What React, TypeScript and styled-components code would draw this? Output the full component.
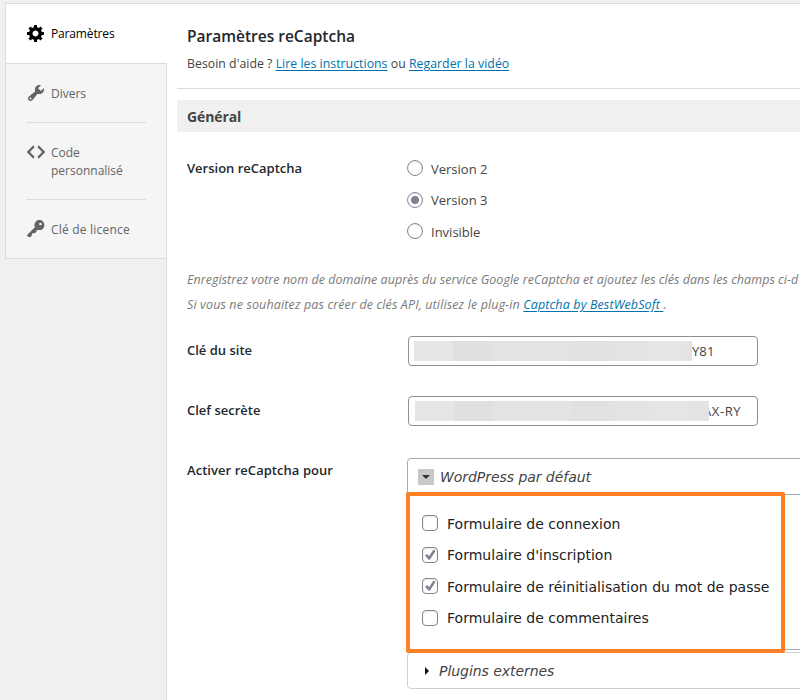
import React from 'react';
import styled, { createGlobalStyle } from 'styled-components';

const GlobalStyle = createGlobalStyle`
  *, *::before, *::after { box-sizing: border-box; }
  html, body { margin: 0; overflow: hidden; background: #f0f0f0; }
  body { font-family: "Open Sans", "Noto Sans", sans-serif; font-size: 13px; color: #444; }
`;

const Page = styled.div`
  width: 800px;
  height: 700px;
  overflow: hidden;
  padding: 3px 0 0 5px;
  background: #f0f0f0;
`;

const Shell = styled.div`
  display: flex;
  width: 795px;
  height: 697px;
  border-top: 1px solid #dcdcdc;
`;

const Sidebar = styled.nav`
  flex: none;
  width: 162px;
  height: 255px;
  border-left: 1px solid #dcdcdc;
  border-bottom: 1px solid #dcdcdc;
  background: #f5f5f5;
`;

const Tab = styled.div<{ $active?: boolean; $height: number }>`
  position: relative;
  z-index: ${p => (p.$active ? 1 : 0)};
  height: ${p => p.$height}px;
  padding: 0 21px 0 20px;
  background: ${p => (p.$active ? '#fff' : 'transparent')};
  border-bottom: ${p => (p.$active ? '1px solid #dcdcdc' : 'none')};
  color: ${p => (p.$active ? '#000' : '#646464')};
`;

const TabBody = styled.div<{ $line?: boolean; $lift?: number }>`
  display: flex;
  align-items: flex-start;
  height: 100%;
  padding-top: 20px;
  border-bottom: ${p => (p.$line ? '1px solid #dcdcdc' : 'none')};

  svg {
    flex: none;
    width: 20px;
    height: 20px;
    margin: ${p => -(p.$lift ?? 0)}px 5px 0 0;
    fill: currentColor;
  }
`;

const TabLabel = styled.span<{ $track?: number }>`
  font-size: 12px;
  line-height: 18px;
  padding-top: 1px;
  letter-spacing: ${p => p.$track ?? 0}px;
`;

const Content = styled.main`
  flex: 1;
  min-width: 0;
  height: 696px;
  padding-left: 10px;
  background: #fff;
  border-left: 1px solid #dcdcdc;
  margin-left: -1px;
`;

const Intro = styled.header`
  height: 85px;
  padding: 20px 0 0 10px;
  border-bottom: 1px solid #dcdcdc;
`;

const Title = styled.h1`
  margin: 0;
  font-size: 15.5px;
  font-weight: 600;
  line-height: 24px;
  color: #23282d;
`;

const Help = styled.p`
  margin: 7px 0 0;
  font-size: 12.3px;
  line-height: 18px;
  letter-spacing: 0.025px;
  white-space: nowrap;
`;

const Link = styled.a`
  color: #0073aa;
  text-decoration: underline;
  text-underline-offset: 2px;
`;

const Section = styled.h2`
  height: 32px;
  margin: 11px 0 0;
  padding-left: 10px;
  background: #f0f0f0;
  color: #444;
  font-size: 14px;
  font-weight: 700;
  line-height: 33px;
  letter-spacing: -0.1px;
`;

const Row = styled.div<{ $height: number }>`
  display: flex;
  height: ${p => p.$height}px;
  padding-left: 10px;
`;

const RowLabel = styled.div<{ $track?: number; $top?: number }>`
  flex: none;
  width: 220px;
  padding-top: ${p => p.$top ?? 4}px;
  font-size: 13px;
  font-weight: 600;
  line-height: 20px;
  letter-spacing: ${p => p.$track ?? 0}px;
  color: #23282d;
`;

const Choices = styled.div`
  display: flex;
  flex-direction: column;
  padding-top: 28px;
  gap: 15.5px;
`;

const Choice = styled.label<{ $textTop: number }>`
  display: flex;
  align-items: flex-start;
  height: 16px;
  gap: 8px;
  line-height: 16px;

  span { padding-top: ${p => p.$textTop}px; }
`;

const Radio = styled.i<{ $on?: boolean }>`
  width: 16px;
  height: 16px;
  border: 1px solid #82878c;
  border-radius: 50%;
  background: ${p => (p.$on ? 'radial-gradient(circle, #7f8494 0 3.7px, transparent 4.4px)' : '#fff')};
  box-shadow: inset 0 1px 2px rgba(0, 0, 0, 0.1);
`;

const Note = styled.div`
  height: 82px;
  padding: 13px 0 0 10px;
  font-size: 12.5px;
  font-style: italic;
  line-height: 25px;
  white-space: nowrap;
  color: #7a7a7a;
`;

const NoteLine = styled.div<{ $track: number }>`
  overflow: hidden;
  letter-spacing: ${p => p.$track}px;
`;

const Field = styled.div`
  display: flex;
  align-items: center;
  width: 350px;
  height: 30px;
  margin-left: 1px;
  padding-left: 5px;
  border: 1px solid #8c8f94;
  border-radius: 4px;
  background: #fff;
`;

const Redacted = styled.span<{ $width: number; $shift: number }>`
  flex: none;
  z-index: 1;
  width: ${p => p.$width}px;
  height: 20px;
  margin-left: ${p => p.$shift}px;
  background: linear-gradient(90deg, #e4e5e7 0 39px, #e0e0e0 39px 78px, #e3e3e5 78px 156px, #e1e1e1 156px 195px, #e3e3e5 195px 234px, #e4e5e7 234px 273px, #e3e3e4 273px);
`;

const Tail = styled.span<{ $tuck?: boolean }>`
  line-height: 20px;
  letter-spacing: ${p => (p.$tuck ? 0.6 : 0.1)}px;
  margin-left: ${p => (p.$tuck ? -6 : 0)}px;
`;

const Groups = styled.div`
  position: relative;
  flex: none;
  width: 430px;
  margin-top: 2px;
  font-family: "DejaVu Sans", sans-serif;
  font-size: 14px;
`;

const Group = styled.section`
  height: 192px;
  border: 1px solid #a7aaad;
  border-radius: 4px;
`;

const GroupHead = styled.div<{ $line?: boolean }>`
  display: flex;
  align-items: center;
  height: 36px;
  padding-left: 10px;
  gap: ${p => (p.$line ? 6 : 5)}px;
  border-bottom: ${p => (p.$line ? '1px solid #a7aaad' : 'none')};
  font-style: italic;
  letter-spacing: -0.05px;
`;

const Toggle = styled.span<{ $open?: boolean }>`
  display: flex;
  width: 16px;
  height: 16px;
  background: ${p => (p.$open ? '#c8c8c8' : 'transparent')};

  svg { width: 16px; height: 16px; fill: ${p => (p.$open ? '#333' : '#111')}; }
`;

const CheckList = styled.div`
  display: flex;
  flex-direction: column;
  gap: 15.5px;
  padding: 20px 0 0 14px;
`;

const CheckRow = styled.label`
  display: flex;
  align-items: center;
  height: 16px;
  gap: 9px;
  line-height: 16px;
  letter-spacing: 0.02px;
  color: #222;
  white-space: nowrap;

  span { padding-top: 1px; }
`;

const Box = styled.i`
  display: flex;
  width: 16px;
  height: 16px;
  border: 1px solid #82878c;
  border-radius: 4px;
  background: #fff;
  box-shadow: inset 0 1px 2px rgba(0, 0, 0, 0.1);

  svg { width: 14px; height: 14px; fill: #7f8494; }
`;

const Highlight = styled.div`
  position: absolute;
  left: -1px;
  top: 34px;
  width: 379px;
  height: 161px;
  border: 4px solid #ff7f27;
  border-radius: 2px;
  pointer-events: none;
`;

const NextGroup = styled.section`
  height: 37px;
  margin-top: 2px;
  border: 1px solid #ccd0d4;
  border-radius: 4px;
`;

const icons = {
  gear: 'M18 12h-2.18c-.17.7-.44 1.35-.81 1.93l1.54 1.54-2.1 2.1-1.54-1.54c-.58.36-1.23.63-1.91.79V19H8v-2.18c-.68-.16-1.33-.43-1.91-.79l-1.54 1.54-2.12-2.12 1.54-1.54c-.36-.58-.63-1.23-.79-1.91H1V9.03h2.17c.16-.7.44-1.35.8-1.94L2.43 5.55l2.1-2.1 1.54 1.54c.58-.37 1.24-.64 1.93-.81V2h3v2.18c.68.16 1.33.43 1.91.79l1.54-1.54 2.12 2.12-1.54 1.54c.36.59.64 1.24.8 1.94H18V12zm-8.5 1.5c1.66 0 3-1.34 3-3s-1.34-3-3-3-3 1.34-3 3 1.34 3 3 3z',
  wrench: 'M16.68 9.77c-1.34 1.34-3.3 1.67-4.95.99l-5.41 6.52c-.99.99-2.59.99-3.58 0s-.99-2.59 0-3.57l6.52-5.42c-.68-1.65-.35-3.61.99-4.95 1.28-1.28 3.12-1.62 4.72-1.06l-2.89 2.89 2.82 2.82 2.86-2.87c.53 1.58.18 3.39-1.08 4.65zM3.81 16.21c.4.39 1.04.39 1.43 0 .4-.4.4-1.04 0-1.43-.39-.4-1.03-.4-1.43 0-.39.39-.39 1.03 0 1.43z',
  code: 'M8.6 5.2L3.9 10l4.7 4.8-1.3 1.9L.8 10l6.5-6.7zm2.8 9.6l4.7-4.8-4.7-4.8 1.3-1.9 6.5 6.7-6.5 6.7z',
  key: 'M16.95 2.58c1.96 1.95 1.96 5.12 0 7.07-1.51 1.51-3.75 1.84-5.59 1.01l-1.87 3.31-2.99.31L5 18H2l-1-2 7.95-7.69c-.92-1.87-.62-4.18.93-5.73 1.95-1.96 5.12-1.96 7.07 0zm-2.51 3.79c.74 0 1.33-.6 1.33-1.34 0-.73-.59-1.33-1.33-1.33-.73 0-1.33.6-1.33 1.33 0 .74.6 1.34 1.33 1.34z',
};

const Icon = ({ name }: { name: keyof typeof icons }) => (
  <svg viewBox="0 0 20 20"><path d={icons[name]} /></svg>
);

const versions = [
  { label: 'Version 2', top: 1 },
  { label: 'Version 3', top: 0 },
  { label: 'Invisible', top: 1 },
];

const forms = [
  { label: 'Formulaire de connexion', on: false },
  { label: "Formulaire d'inscription", on: true },
  { label: 'Formulaire de réinitialisation du mot de passe', on: true },
  { label: 'Formulaire de commentaires', on: false },
];

export default function App() {
  return (
    <>
      <GlobalStyle />
      <Page>
        <Shell>
          <Sidebar>
            <Tab $active $height={60}>
              <TabBody $lift={1}><Icon name="gear" /><TabLabel $track={-0.15}>Paramètres</TabLabel></TabBody>
            </Tab>
            <Tab $height={59}>
              <TabBody $line $lift={1}><Icon name="wrench" /><TabLabel>Divers</TabLabel></TabBody>
            </Tab>
            <Tab $height={77}>
              <TabBody $line $lift={1}><Icon name="code" /><TabLabel>Code<br />personnalisé</TabLabel></TabBody>
            </Tab>
            <Tab $height={58}>
              <TabBody $lift={1}><Icon name="key" /><TabLabel $track={0.2}>Clé de licence</TabLabel></TabBody>
            </Tab>
          </Sidebar>
          <Content>
            <Intro>
              <Title>Paramètres reCaptcha</Title>
              <Help>
                Besoin d'aide ? <Link>Lire les instructions</Link> ou <Link>Regarder la vidéo</Link>
              </Help>
            </Intro>
            <Section>Général</Section>
            <Row $height={122}>
              <RowLabel $top={26}>Version reCaptcha</RowLabel>
              <Choices>
                {versions.map(v => (
                  <Choice key={v.label} $textTop={v.top}>
                    <Radio $on={v.label === 'Version 3'} /><span>{v.label}</span>
                  </Choice>
                ))}
              </Choices>
            </Row>
            <Note>
              <NoteLine $track={0.035}>Enregistrez votre nom de domaine auprès du service Google reCaptcha et ajoutez les clés dans les champs ci-d</NoteLine>
              <NoteLine $track={0.13}>Si vous ne souhaitez pas créer de clés API, utilisez le plug-in <Link>Captcha by BestWebSoft </Link>.</NoteLine>
            </Note>
            <Row $height={60}>
              <RowLabel>Clé du site</RowLabel>
              <Field><Redacted $width={278} $shift={0} /><Tail>Y81</Tail></Field>
            </Row>
            <Row $height={60}>
              <RowLabel>Clef secrète</RowLabel>
              <Field><Redacted $width={294} $shift={1} /><Tail $tuck>AX-RY</Tail></Field>
            </Row>
            <Row $height={240}>
              <RowLabel $track={0.05}>Activer reCaptcha pour</RowLabel>
              <Groups>
                <Group>
                  <GroupHead $line>
                    <Toggle $open><svg viewBox="0 0 16 16"><path d="M4 6h8l-4 4z" /></svg></Toggle>
                    <span>WordPress par défaut</span>
                  </GroupHead>
                  <CheckList>
                    {forms.map(f => (
                      <CheckRow key={f.label}>
                        <Box>{f.on && <svg viewBox="0 0 14 14"><path d="M2 7.4l2.1-1.5 2 2.1 4.4-6.4 2 1.3-5.6 8.9H5.6z" /></svg>}</Box>
                        <span>{f.label}</span>
                      </CheckRow>
                    ))}
                  </CheckList>
                </Group>
                <NextGroup>
                  <GroupHead>
                    <Toggle><svg viewBox="0 0 16 16"><path d="M7 4v8l4-4z" /></svg></Toggle>
                    <span>Plugins externes</span>
                  </GroupHead>
                </NextGroup>
                <Highlight />
              </Groups>
            </Row>
          </Content>
        </Shell>
      </Page>
    </>
  );
}
